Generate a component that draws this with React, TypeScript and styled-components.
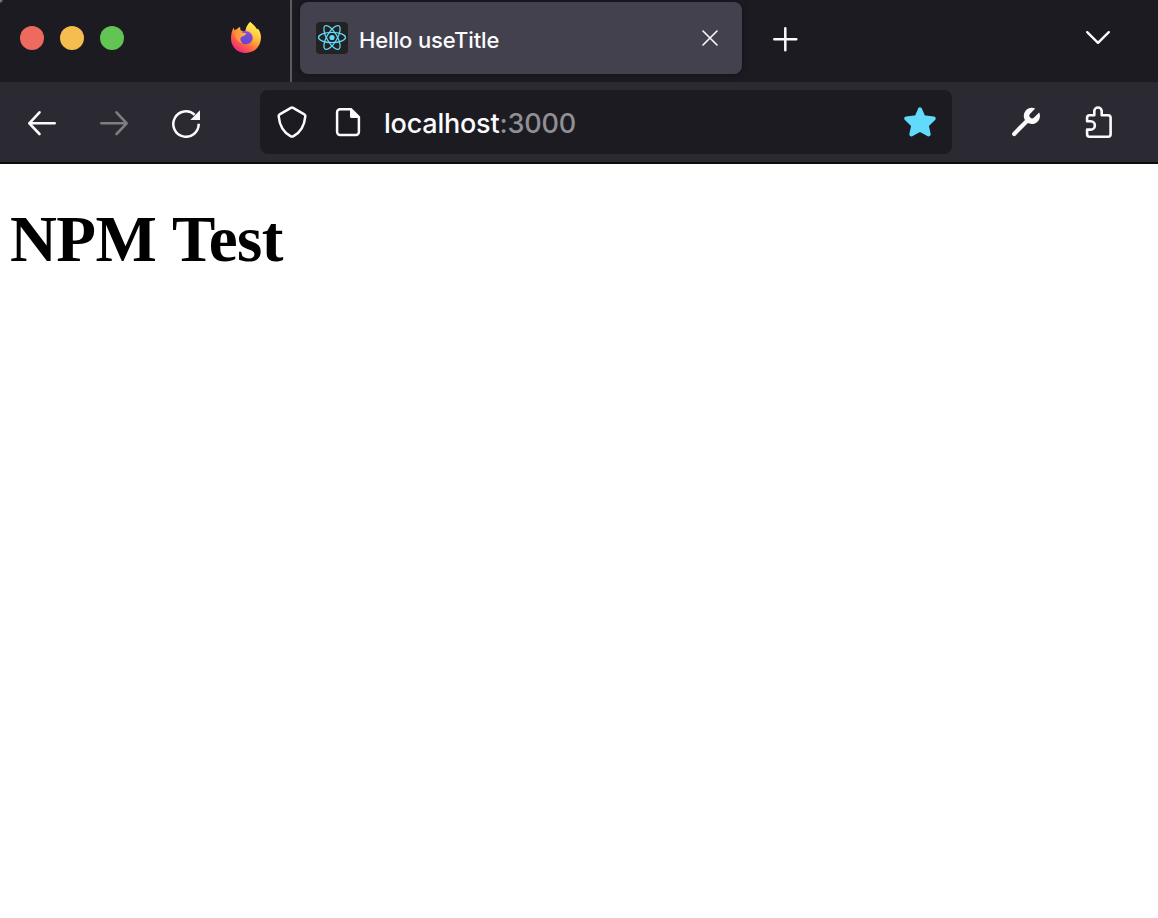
import React from "react";
import styled, { createGlobalStyle } from "styled-components";

const GlobalStyle = createGlobalStyle`
  body { margin: 0; background: #fff; }
  * { box-sizing: border-box; }
  svg { display: block; }
`;

const Window = styled.div`
  width: 1158px;
  height: 918px;
  overflow: hidden;
  background: #fff;
  font-family: Inter, "Liberation Sans", sans-serif;
  color: #fbfbfe;
`;

const TabBar = styled.header`
  height: 82px;
  display: flex;
  align-items: flex-start;
  background: radial-gradient(circle at 0 0, #77777c 0, #77777c 1.5px, #1c1b22 3.5px);
`;

const WindowControls = styled.div`
  display: flex;
  gap: 16px;
  padding: 26px 0 0 20px;
`;

const Light = styled.span<{ $color: string }>`
  width: 24px;
  height: 24px;
  border-radius: 50%;
  background: ${(p) => p.$color};
`;

const PinnedTab = styled.div`
  width: 168px;
  height: 82px;
  padding: 22px 0 0 106px;
  border-right: 2px solid #5b5a60;
`;

const Tab = styled.div`
  display: flex;
  align-items: center;
  width: 442px;
  height: 72px;
  margin: 2px 0 0 8px;
  padding: 0 16px;
  border-radius: 8px;
  background: #42414d;
  box-shadow: 0 0 6px rgba(0, 0, 0, 0.45);
`;

const Favicon = styled.span`
  width: 32px;
  height: 32px;
  border-radius: 4px;
  background: #222222;
`;

const TabTitle = styled.span`
  flex: 1;
  margin: 4px 0 0 11px;
  font-size: 22px;
  font-weight: 500;
  line-height: 28px;
  letter-spacing: -0.1px;
  white-space: nowrap;
`;

const TabAction = styled.button<{ $left?: number; $top?: number }>`
  width: 32px;
  height: 32px;
  margin: ${(p) => p.$top ?? 0}px 0 0 ${(p) => p.$left ?? 0}px;
  padding: 0;
  border: 0;
  background: none;
  color: inherit;
`;

const NavBar = styled.nav`
  display: flex;
  align-items: center;
  height: 82px;
  padding: 0 43px 0 26px;
  background: #2b2a33;
  border-bottom: 2px solid #0c0c0d;
`;

const NavButtons = styled.div`
  display: flex;
  gap: 40px;
`;

const NavButton = styled.button<{ $faded?: boolean }>`
  width: 32px;
  height: 32px;
  padding: 0;
  border: 0;
  background: none;
  color: ${(p) => (p.$faded ? "#7e7d82" : "#fbfbfe")};
`;

const AddressBar = styled.div`
  display: flex;
  align-items: center;
  width: 692px;
  height: 64px;
  margin-left: 58px;
  padding: 0 16px;
  border-radius: 8px;
  background: #1c1b22;
`;

const SiteIcons = styled.div`
  display: flex;
  gap: 24px;
`;

const Address = styled.span`
  flex: 1;
  margin: 3px 0 0 20px;
  font-size: 27px;
  font-weight: 500;
  line-height: 36px;
  letter-spacing: -0.22px;
  white-space: nowrap;
`;

const Port = styled.span`
  color: #8f8f94;
  letter-spacing: -0.15px;
`;

const Tools = styled.div`
  display: flex;
  gap: 41px;
  margin-left: 58px;
`;

const Page = styled.main`
  padding: 39px 10px;
`;

const Heading = styled.h1`
  margin: 0;
  font: bold 65px/73px "Liberation Serif", "Times New Roman", serif;
  letter-spacing: -0.6px;
  word-spacing: 1.3px;
  color: #000;
  white-space: nowrap;
`;

const Glyph = ({ children, width = 2.6 }: { children: React.ReactNode; width?: number }) => (
  <svg width="32" height="32" viewBox="0 0 32 32" fill="none" stroke="currentColor"
    strokeWidth={width} strokeLinecap="round" strokeLinejoin="round">
    {children}
  </svg>
);

const FirefoxLogo = () => (
  <svg width="32" height="32" viewBox="0 0 32 32">
    <defs>
      <linearGradient id="flame" x1="0.82" y1="0.12" x2="0.25" y2="0.92">
        <stop offset="0.1" stopColor="#ffe34f" />
        <stop offset="0.4" stopColor="#ffae35" />
        <stop offset="0.7" stopColor="#ff6543" />
        <stop offset="1" stopColor="#f22d75" />
      </linearGradient>
      <linearGradient id="globe" x1="0.6" y1="0" x2="0.3" y2="1">
        <stop offset="0" stopColor="#8a48dc" />
        <stop offset="1" stopColor="#5b49cc" />
      </linearGradient>
      <linearGradient id="tail" x1="0" y1="0" x2="0" y2="1">
        <stop offset="0" stopColor="#ffec50" />
        <stop offset="1" stopColor="#ffb939" stopOpacity="0.2" />
      </linearGradient>
      <linearGradient id="head" x1="0" y1="0" x2="1" y2="0">
        <stop offset="0" stopColor="#ff8a3c" />
        <stop offset="1" stopColor="#ffb243" />
      </linearGradient>
    </defs>
    <path fill="url(#flame)" d="M20.2 0C21.400 1.600 25 3.200 27 7.500L27.700 6.400C30 9 31.200 12.400 30.900 16.200 30.400 24.800 24.100 31 16 31 7.400 31 1 24.700 1 16.400 1 12 2 8.400 3.700 5.500L4.600 8.400C5.300 7.700 6.100 7.300 7 7.100 7.700 6.200 8.800 5.400 10.100 5L10.500 8.200 15.500 9.800C15.700 6 17.500 2.500 20.200 0Z" />
    <circle cx="15.800" cy="15.400" r="6.900" fill="url(#globe)" />
    <path fill="url(#tail)" d="M20.2 0C21.400 1.600 25 3.200 27.300 8.500 29.500 14 27 20 22.800 22.300 24 19 23.500 15 21.200 12.200 19.800 10.500 17.500 9.300 15.500 9.300 15.700 6 17.500 2.500 20.200 0Z" />
    <path fill="url(#head)" d="M4.600 10.500C6 8.200 8.700 8 10.700 9.700 12 10.600 14 10.800 16.200 11.300 16.400 12.500 15 13.500 13.500 14 11.500 14.700 10.900 15.400 10.600 16.200 10 18.300 11 20 12.800 21.300 7.500 20 4.200 16 4.600 10.500Z" />
  </svg>
);

const ReactLogo = () => (
  <svg width="32" height="32" viewBox="0 0 32 32" fill="none" stroke="#61dafb" strokeWidth="1.250">
    <circle cx="16" cy="15.500" r="2.600" fill="#61dafb" stroke="none" />
    {[0, 60, 120].map((angle) => (
      <ellipse key={angle} cx="16" cy="15.500" rx="13.500" ry="5.100" transform={`rotate(${angle} 16 15.500)`} />
    ))}
  </svg>
);

const ArrowLeft = () => <Glyph><path d="M28.700 17.300H3.300M13.500 6.300L3.300 17.300l10.200 10.700" /></Glyph>;
const ArrowRight = () => <Glyph><path d="M3.300 17.300h25.400M18.500 6.300L28.700 17.300l-10.200 10.700" /></Glyph>;

const Reload = () => (
  <Glyph width={2.5}>
    <path d="M28.700 17.800A12.700 12.700 0 1 1 24.700 8.800" strokeLinecap="butt" />
    <path d="M30 4.300V14H20.300Z" fill="currentColor" stroke="none" />
  </Glyph>
);

const Shield = () => (
  <Glyph width={2.500}>
    <path d="M14.900 1.800Q16 1.200 17.100 1.800L28.300 8.300Q29.500 9 29.300 10.300C28.500 19.500 25.300 26 17.200 30.300Q16 30.900 14.800 30.300C6.700 26 3.500 19.500 2.700 10.300Q2.500 9 3.700 8.300Z" />
  </Glyph>
);

const Document = () => (
  <Glyph width={2.500}>
    <path d="M18 3.200H8a2.900 2.900 0 0 0-2.900 2.900v20a2.900 2.900 0 0 0 2.900 2.900h16a2.900 2.900 0 0 0 2.900-2.900V12" />
    <path d="M18 2h1.500L28.100 10.500v1.500H19.500a1.500 1.500 0 0 1-1.500-1.500Z" fill="currentColor" stroke="none" />
  </Glyph>
);

const Star = () => (
  <svg width="32" height="32" viewBox="0 0 32 32" fill="#61dafb" stroke="#61dafb" strokeWidth="4" strokeLinejoin="round">
    <path d="M16 3.300l3.500 7.900 10.200 1.300-7 6.700 2 9.200-8.700-4.600-8.700 4.600 2-9.200-7-6.700 10.200-1.300Z" />
  </svg>
);

const Wrench = () => (
  <Glyph width={4.200}>
    <path d="M4.200 27.900L17 15" />
    <path d="M25.200 2.500A8.100 8.100 0 1 0 29.200 6.400L24 11.500A2.600 2.600 0 0 1 20.200 7.700Z" fill="currentColor" stroke="none" />
  </Glyph>
);

const Puzzle = () => (
  <Glyph width={2.600}>
    <path d="M4.100 15.300V11.700a2.500 2.500 0 0 1 2.500-2.500H11.300V5.200a3.700 3.700 0 0 1 7.400 0V9.200h6.400a2.500 2.500 0 0 1 2.500 2.500v16.500a2.500 2.500 0 0 1-2.500 2.500H6.600a2.500 2.500 0 0 1-2.500-2.500v-4.600H7.700a4.150 4.150 0 0 0 0-8.300Z" />
  </Glyph>
);

export default function App() {
  return (
    <Window>
      <GlobalStyle />
      <TabBar>
        <WindowControls>
          <Light $color="#ee6a5f" />
          <Light $color="#f5bd4f" />
          <Light $color="#61c455" />
        </WindowControls>
        <PinnedTab><FirefoxLogo /></PinnedTab>
        <Tab>
          <Favicon><ReactLogo /></Favicon>
          <TabTitle>Hello useTitle</TabTitle>
          <TabAction aria-label="Close tab">
            <Glyph width={1.600}><path d="M9 9l14 14M23 9L9 23" /></Glyph>
          </TabAction>
        </Tab>
        <TabAction $left={27} $top={23} aria-label="New tab">
          <Glyph width={2.500}><path d="M5.300 16.300h22M16.300 5.300v22" /></Glyph>
        </TabAction>
        <TabAction $left={281} $top={22} aria-label="List all tabs">
          <Glyph width={2.400}><path d="M5.200 10.200l10.800 10.600 10.800-10.600" /></Glyph>
        </TabAction>
      </TabBar>
      <NavBar>
        <NavButtons>
          <NavButton aria-label="Back"><ArrowLeft /></NavButton>
          <NavButton $faded aria-label="Forward"><ArrowRight /></NavButton>
          <NavButton aria-label="Reload"><Reload /></NavButton>
        </NavButtons>
        <AddressBar>
          <SiteIcons><Shield /><Document /></SiteIcons>
          <Address>localhost<Port>:3000</Port></Address>
          <Star />
        </AddressBar>
        <Tools>
          <NavButton aria-label="Developer tools"><Wrench /></NavButton>
          <NavButton aria-label="Extensions"><Puzzle /></NavButton>
        </Tools>
      </NavBar>
      <Page><Heading>NPM Test</Heading></Page>
    </Window>
  );
}
